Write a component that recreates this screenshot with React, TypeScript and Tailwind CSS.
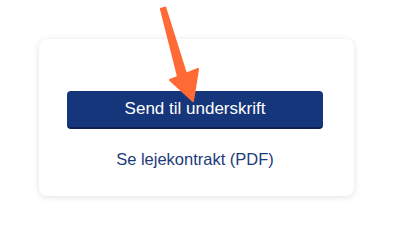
export default function App() {
  return (
    <div className="relative w-[393px] h-[235px] bg-white" style={{ fontFamily: '"Liberation Sans", Arial, sans-serif' }}>
      <div className="pt-[39px] pl-[39px]">
        <div className="w-[315px] h-[157px] rounded-lg bg-white shadow-[0_1px_6px_rgba(0,0,0,0.12)] pt-[52px] pl-[28px]">
          <button className="w-[256px] h-[38px] rounded-[4px] bg-[#15367a] border-b-2 border-[#0c2152] text-white text-[17px] flex items-center justify-center">
            Send til underskrift
          </button>
          <div className="w-[256px] mt-[18px] text-center text-[16.5px] leading-6 text-[#1c3a7c]">
            Se lejekontrakt (PDF)
          </div>
        </div>
      </div>
      <svg className="absolute left-0 top-0 pointer-events-none" width="393" height="235" viewBox="0 0 393 235">
        <polygon points="160.6,8.7 165.4,7.3 186.3,73.8 177.7,76.2" fill="#ff6a35" stroke="#ff6a35" strokeWidth="1.5" strokeLinejoin="round" />
        <polygon points="170,80 198,69 193,101" fill="#ff6a35" stroke="#ff6a35" strokeWidth="2" strokeLinejoin="round" />
      </svg>
    </div>
  )
}
